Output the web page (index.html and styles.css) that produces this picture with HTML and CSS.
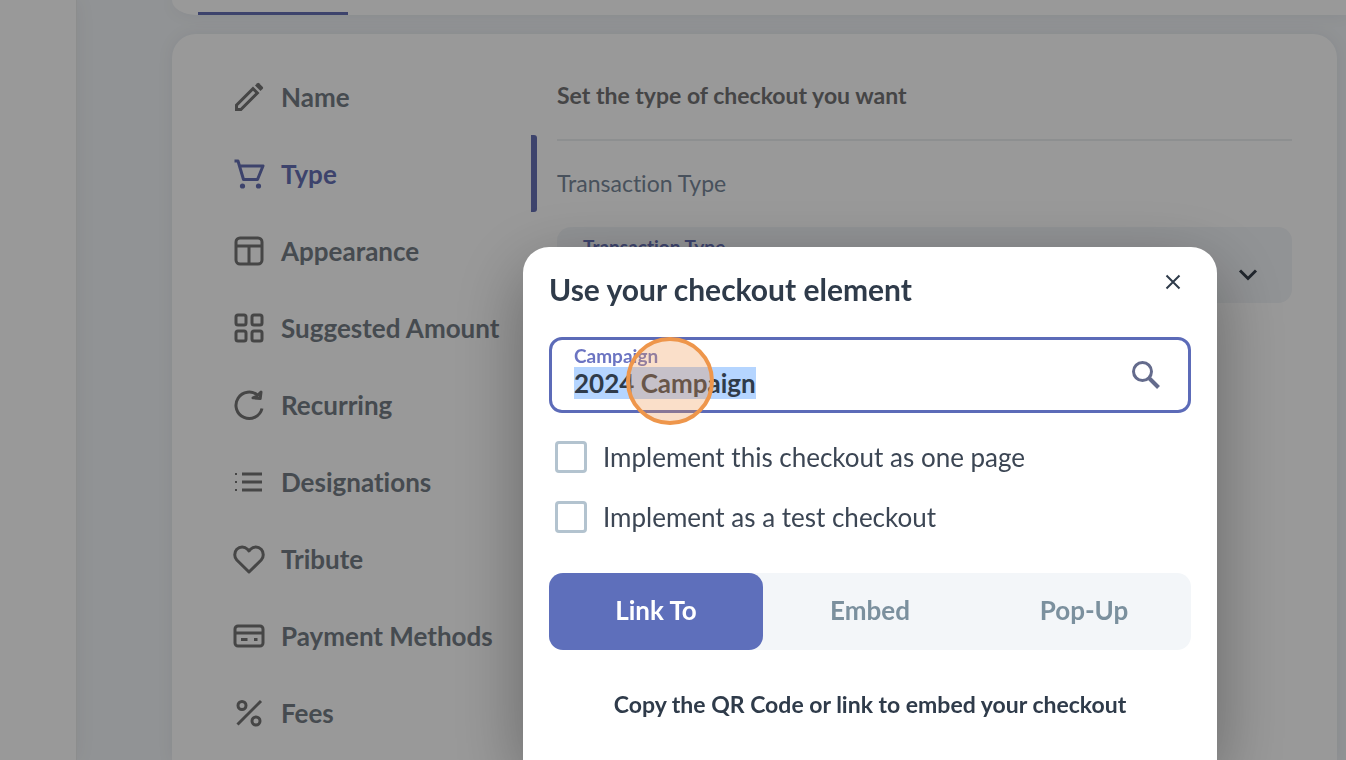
FILE: index.html
```html
<!DOCTYPE html>
<html lang="en">
<head>
<meta charset="utf-8">
<title>Checkout element</title>
<link rel="stylesheet" href="styles.css">
</head>
<body>
<div class="app">
  <aside class="rail"></aside>
  <main class="main">
    <div class="tabbar"><div class="tabbar-active"></div></div>
    <div class="card">
      <nav class="menu">
        <a class="menu-item" href="#"><svg class="icon" viewBox="0 0 32 32"><path d="M2 30V23.500L20 5.500 26.500 12 8.500 30Z M5 24.700V27h2.300L22.300 12 20 9.700Z" fill="currentColor" fill-rule="evenodd"/><path d="M22 4.500 24.300 2.200Q25.200 1.400 26.100 2.200L29.800 5.900Q30.600 6.800 29.800 7.700L27.500 10Z" fill="currentColor"/></svg>Name</a>
        <a class="menu-item active" href="#"><svg class="icon" viewBox="0 0 32 32"><path d="M1.500 3H5L10.500 21.500H24.500L30 8H6.500" class="line"/><circle cx="9.500" cy="28" r="2.600" fill="currentColor"/><circle cx="25.500" cy="28" r="2.600" fill="currentColor"/></svg>Type</a>
        <a class="menu-item" href="#"><svg class="icon" viewBox="0 0 32 32"><rect x="3" y="3" width="26" height="26" rx="4" class="line"/><path d="M3 11H29M16 11V29" class="line"/></svg>Appearance</a>
        <a class="menu-item" href="#"><svg class="icon" viewBox="0 0 32 32"><rect x="3" y="3" width="10" height="10" rx="2" class="line"/><rect x="19" y="3" width="10" height="10" rx="2" class="line"/><rect x="3" y="19" width="10" height="10" rx="2" class="line"/><rect x="19" y="19" width="10" height="10" rx="2" class="line"/></svg>Suggested Amount</a>
        <a class="menu-item" href="#"><svg class="icon" viewBox="0 0 32 32"><path d="M29 19.500A13.200 13.200 0 1 1 25 6.500" class="line"/><path d="M28 3 27.200 9.500 20 8.800 23.500 7.500Z" class="line" fill="currentColor"/></svg>Recurring</a>
        <a class="menu-item" href="#"><svg class="icon" viewBox="0 0 32 32"><path d="M9 8H29M9 16H29M9 24H29" class="line"/><path d="M2 8H4M2 16H4M2 24H4" stroke="currentColor" stroke-width="2"/></svg>Designations</a>
        <a class="menu-item" href="#"><svg class="icon" viewBox="0 0 32 32"><path d="M16 29 3.800 17A8 8 0 0 1 3.800 6.300 7.600 7.600 0 0 1 14.500 6.300L16 8 17.500 6.300A7.600 7.600 0 0 1 28.200 6.300 8 8 0 0 1 28.200 17Z" class="line"/></svg>Tribute</a>
        <a class="menu-item" href="#"><svg class="icon" viewBox="0 0 32 32"><rect x="2" y="6" width="28" height="20" rx="3" class="line"/><path d="M2 13H30M8 19.500H14.500M21 19.500H24.500" class="line"/></svg>Payment Methods</a>
        <a class="menu-item" href="#"><svg class="icon" viewBox="0 0 32 32"><path d="M4.500 27.500 28 4" class="line"/><circle cx="9" cy="8.500" r="4" class="line"/><circle cx="23" cy="24" r="4" class="line"/></svg>Fees</a>
      </nav>
      <section class="panel">
        <h2 class="panel-title">Set the type of checkout you want</h2>
        <p class="panel-text">Transaction Type</p>
        <div class="select-box">
          <label class="select-label" for="kind">Transaction Type</label>
          <select class="select" id="kind"><option></option></select>
          <svg class="chevron" viewBox="0 0 20 14"><path d="M2 2.500 10 10.500 18 2.500"/></svg>
        </div>
      </section>
    </div>
  </main>
</div>
<div class="overlay">
  <div class="modal" role="dialog" aria-labelledby="modal-title">
    <header class="modal-head">
      <h1 class="modal-title" id="modal-title">Use your checkout element</h1>
      <button class="close" type="button" aria-label="Close"><svg viewBox="0 0 16 16"><path d="M1.500 1.500 14.500 14.500M14.500 1.500 1.500 14.500"/></svg></button>
    </header>
    <div class="field">
      <div class="field-body">
        <label class="field-label" for="campaign">Campaign</label>
        <input class="field-input" id="campaign" type="text" value="2024 Campaign">
      </div>
      <svg class="search" viewBox="0 0 28 28"><circle cx="10.500" cy="10.500" r="9"/><path d="M17.500 17.500 26.500 26.500"/></svg>
      <span class="pointer"></span>
    </div>
    <div class="checks">
      <label class="check"><input class="box" type="checkbox">Implement this checkout as one page</label>
      <label class="check"><input class="box" type="checkbox">Implement as a test checkout</label>
    </div>
    <div class="segments">
      <button class="segment chosen" type="button">Link To</button>
      <button class="segment" type="button">Embed</button>
      <button class="segment" type="button">Pop-Up</button>
    </div>
    <p class="hint">Copy the QR Code or link to embed your checkout</p>
  </div>
</div>
<script src="app.js"></script>
</body>
</html>
```
FILE: styles.css
```css
* { box-sizing: border-box; }
body {
  margin: 0;
  height: 100vh;
  overflow: hidden;
  font-family: Lato, "Open Sans", sans-serif;
  font-variant-ligatures: none;
  background: #f2f5f8;
  color: #2f3b4a;
}
h1, h2, p { margin: 0; }
button, input, select { font: inherit; color: inherit; }

.app { display: flex; height: 100%; }
.rail {
  width: 77px;
  flex: none;
  background: #fff;
  border-right: 1px solid #e9ebec;
  box-shadow: 0 0 20px rgba(0, 0, 0, 0.06);
}
.main {
  flex: 1;
  display: flex;
  flex-direction: column;
  gap: 19px;
  padding-left: 95px;
}
.tabbar {
  flex: none;
  display: flex;
  align-items: flex-end;
  height: 15px;
  padding-left: 26px;
  background: #fff;
  border-bottom-left-radius: 24px 15px;
  box-shadow: 0 0 16px rgba(50, 60, 75, 0.08);
}
.tabbar-active { width: 150px; height: 3px; background: #6670b4; }
.card {
  flex: 1;
  display: flex;
  gap: 20px;
  margin-right: 9px;
  padding: 24px 45px 0 61px;
  background: #fff;
  border-radius: 24px 24px 0 0;
  box-shadow: 0 0 16px rgba(50, 60, 75, 0.08);
}
.menu { width: 304px; flex: none; }
.menu-item {
  display: flex;
  align-items: center;
  gap: 16px;
  height: 77px;
  font-size: 26px;
  font-weight: 700;
  color: #757d86;
  text-decoration: none;
  white-space: nowrap;
}
.menu-item.active {
  color: #6670b4;
  background: linear-gradient(#6670b4, #6670b4) right / 6px 100% no-repeat;
  border-radius: 3px;
}
.icon { width: 32px; height: 32px; flex: none; color: #757575; }
.active .icon { color: #6670b4; }
.line { fill: none; stroke: currentColor; stroke-width: 3; stroke-linejoin: round; }

.panel { flex: 1; }
.panel-title {
  padding: 21px 0 28px;
  border-bottom: 2px solid #eceff1;
  font-size: 23px;
  line-height: 32px;
  color: #747476;
}
.panel-text {
  padding: 26px 0 28px;
  font-size: 23px;
  line-height: 32px;
  color: #78889a;
}
.select-box {
  display: grid;
  position: relative;
  height: 76px;
  padding: 8px 26px;
  background: #f2f5f8;
  border-radius: 14px;
}
.select-label { font-size: 19px; line-height: 24px; font-weight: 700; color: #6670b4; }
.select { width: 100%; border: 0; background: none; appearance: none; }
.chevron { position: absolute; right: 34px; top: 41px; width: 20px; height: 14px; fill: none; stroke: #37404c; stroke-width: 3; }

.overlay {
  position: fixed;
  inset: 0;
  display: flex;
  justify-content: center;
  padding: 247px 0 0 394px;
  background: rgba(0, 0, 0, 0.4);
}
.modal {
  width: 694px;
  padding: 26px 26px 0;
  background: #fff;
  border-radius: 26px 26px 0 0;
  box-shadow: 0 22px 70px rgba(0, 0, 0, 0.34);
}
.modal-head { display: flex; justify-content: space-between; align-items: flex-start; }
.modal-title { font-size: 30px; line-height: 32px; }
.close { width: 36px; height: 18px; padding: 0 10px; border: 0; background: none; line-height: 0; }
.close svg { width: 16px; height: 16px; stroke: #2f3b4a; stroke-width: 2; }
.field {
  position: relative;
  display: flex;
  align-items: center;
  height: 76px;
  margin-top: 32px;
  padding: 0 28px 0 22px;
  border: 3px solid #5c6bb8;
  border-radius: 13px;
}
.field-body { flex: 1; display: flex; flex-direction: column; padding-bottom: 6px; }
.field-label { font-size: 19px; line-height: 22px; font-weight: 700; color: #6b74c2; }
.field-input {
  width: 100%;
  height: 32px;
  padding: 0;
  border: 0;
  outline: 0;
  background: none;
  font-size: 26px;
  font-weight: 700;
}
.field-input::selection { background: #b5d5ff; color: #2f3b4a; }
.search { width: 28px; height: 28px; fill: none; stroke: #646b8c; stroke-width: 3; }
.search path { stroke-width: 4; }
.pointer {
  position: absolute;
  left: 74px;
  top: -3px;
  width: 88px;
  height: 88px;
  border: 4px solid #ee964b;
  border-radius: 50%;
  background: rgba(238, 150, 75, 0.3);
}
.checks { display: grid; gap: 28px; margin: 28px 0 40px; padding-left: 6px; }
.check { display: flex; align-items: center; gap: 16px; height: 32px; font-size: 26px; line-height: 32px; color: #3c4654; }
.box {
  width: 32px;
  height: 32px;
  margin: 0;
  appearance: none;
  border: 3px solid #b3c3cf;
  border-radius: 4px;
  background: #fff;
}
.segments { display: grid; grid-template-columns: repeat(3, 1fr); background: #f3f6f9; border-radius: 14px; }
.segment {
  height: 77px;
  padding-bottom: 4px;
  border: 0;
  border-radius: 14px;
  background: none;
  font-size: 26px;
  font-weight: 700;
  color: #7b909e;
}
.segment.chosen { background: #5e6fbb; color: #fff; }
.hint { margin-top: 38px; font-size: 23px; line-height: 32px; font-weight: 700; text-align: center; }
```
FILE: app.js
```js
const campaign = document.getElementById("campaign");
campaign.focus();
campaign.select();
```
